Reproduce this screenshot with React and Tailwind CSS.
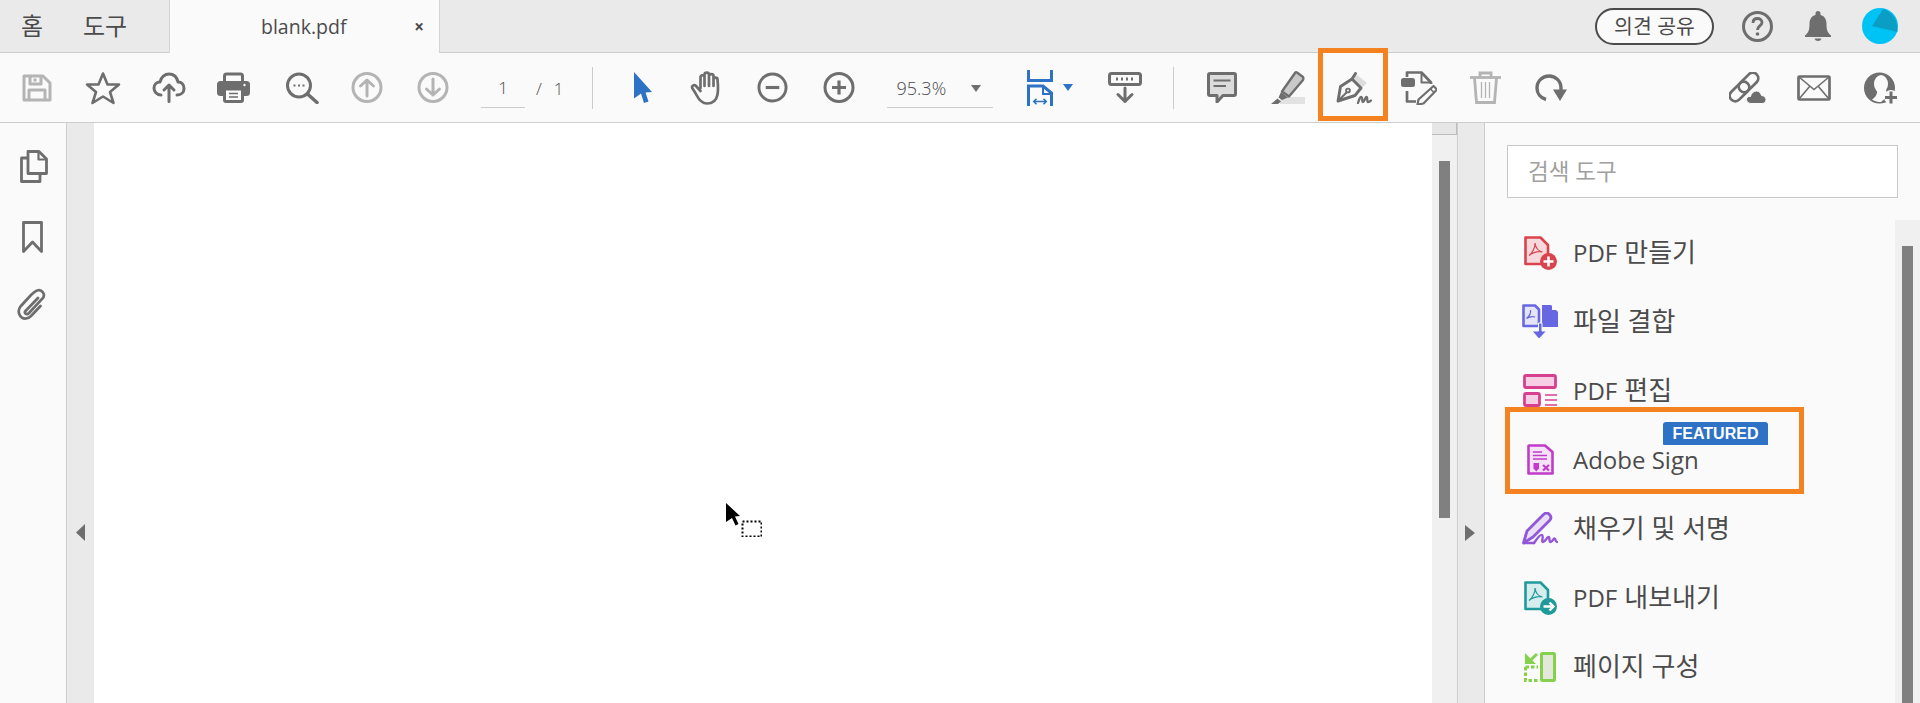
import React from "react";

const GRAY = "#6e6e6e";
const OFF = "#b4b4b4";
const BLUE = "#2d72c4";

// ---- top toolbar icons, each drawn in its own pixel box ----
const SaveIcon = () => (
  <svg viewBox="0 0 30 28" className="w-[30px] h-[28px] ml-[22px] shrink-0" fill="none" stroke={OFF} strokeWidth="3" strokeLinejoin="round">
    <path d="M2 2H21L28 9V26H2Z" />
    <path d="M8 2V10H19V2M13 4.5V7.500" />
    <path d="M7 26V16H23V26" />
  </svg>
);
const StarIcon = () => (
  <svg viewBox="0 0 36 34" className="w-[36px] h-[34px] ml-[33px] shrink-0" fill="none" stroke={GRAY} strokeWidth="2.600" strokeLinejoin="round">
    <path d="M18 2.500L22.500 13.500H34L25 21L28.500 32L18 25.500L7.500 32L11 21L2 13.500H13.500Z" />
  </svg>
);
const CloudUpIcon = () => (
  <svg viewBox="0 0 34 31" className="w-[34px] h-[31px] ml-[31px] shrink-0" fill="none" stroke={GRAY} strokeWidth="3" strokeLinecap="round" strokeLinejoin="round">
    <path d="M9 23C4.500 23 2 19.500 2 16C2 12.500 4.500 10 8 10C9 5 13 2 17 2C22 2 25 5.500 26 10C30 10 32 13 32 16.500C32 20 29.500 23 25 23" />
    <path d="M17 29.500V13M12 18L17 13L22 18" />
  </svg>
);
const PrintIcon = () => (
  <svg viewBox="0 0 33 31" className="w-[33px] h-[31px] ml-[31px] shrink-0">
    <path d="M7.500 10V4Q7.500 2 9.500 2H23.500Q25.500 2 25.500 4V10" fill="none" stroke={GRAY} strokeWidth="3" />
    <rect x="0" y="9" width="33" height="15" rx="3.500" fill={GRAY} />
    <rect x="7.500" y="17" width="18" height="12.500" rx="1.500" fill="#fafafa" stroke={GRAY} strokeWidth="3" />
    <path d="M12 21.500H21M12 25H21" stroke={GRAY} strokeWidth="1.500" />
    <circle cx="27.500" cy="13" r="1.200" fill="#fafafa" />
  </svg>
);
const SearchIcon = () => (
  <svg viewBox="0 0 34 32" className="w-[34px] h-[32px] ml-[35px] shrink-0" fill="none" stroke={GRAY} strokeWidth="3">
    <circle cx="14" cy="13.500" r="11.500" />
    <path d="M22.500 22L32 30.500" strokeWidth="3.500" strokeLinecap="round" />
    <path d="M8.500 13.500H10.500M13 13.500H15M17.500 13.500H19.500" strokeWidth="2" />
  </svg>
);
const UpIcon = () => (
  <svg viewBox="0 0 32 31" className="w-[32px] h-[31px] ml-[32px] shrink-0" fill="none" stroke={OFF} strokeWidth="3" strokeLinecap="round" strokeLinejoin="round">
    <circle cx="16" cy="15.500" r="14" />
    <path d="M16 24V8M9.500 14L16 8L22.500 14" />
  </svg>
);
const DownIcon = () => (
  <svg viewBox="0 0 32 31" className="w-[32px] h-[31px] ml-[34px] shrink-0" fill="none" stroke={OFF} strokeWidth="3" strokeLinecap="round" strokeLinejoin="round">
    <circle cx="16" cy="15.500" r="14" />
    <path d="M16 7V23M9.500 17L16 23L22.500 17" />
  </svg>
);
const ArrowIcon = () => (
  <svg viewBox="0 0 19 31" className="w-[19px] h-[31px] ml-[40px] shrink-0" fill={BLUE}>
    <path d="M1 0L19 20L12.500 20.500L15.500 29.500L11 31L8 21.500L1 26.500Z" />
  </svg>
);
const HandIcon = () => (
  <svg viewBox="0 0 34 34" className="w-[34px] h-[34px] ml-[38px] shrink-0" fill="none" stroke={GRAY} strokeWidth="2.700" strokeLinecap="round" strokeLinejoin="round">
    <path d="M10.500 17V6.500C10.500 3.500 14.500 3.500 14.500 6.500V15M14.500 15V3.800C14.500 1 19 1 19 3.800V15M19 15V5C19 2.500 23.500 2.500 23.500 5V15M23.500 15V8.500C23.500 6 27.500 6 27.500 8.500C28 14 28.500 18 27.500 23.500C26.500 29 23 32.500 17 32.500C11 32.500 8.500 28 6.500 24C5.500 22 3.500 19 2.500 17.500C1 15 4 13.200 6 15L10.500 20" />
  </svg>
);
const MinusIcon = () => (
  <svg viewBox="0 0 32 31" className="w-[31px] h-[31px] ml-[33px] shrink-0" fill="none" stroke={GRAY} strokeWidth="3">
    <circle cx="16" cy="15.500" r="14" />
    <path d="M9 15.500H23" strokeWidth="3.200" />
  </svg>
);
const PlusIcon = () => (
  <svg viewBox="0 0 32 31" className="w-[32px] h-[31px] ml-[35px] shrink-0" fill="none" stroke={GRAY} strokeWidth="3">
    <circle cx="16" cy="15.500" r="14" />
    <path d="M9 15.500H23M16 8.500V22.500" strokeWidth="3.200" />
  </svg>
);
const FitIcon = () => (
  <svg viewBox="0 0 26 36" className="w-[26px] h-[36px] ml-[34px] shrink-0" fill="none" stroke={BLUE} strokeWidth="3">
    <path d="M1.500 0V10.500H24.500V0" />
    <path d="M1.500 36V16H16L24.500 23V36" />
    <path d="M16 16V24H24.500" strokeWidth="2" />
    <path d="M7 31.500H19M9.500 28.800L6.800 31.500L9.500 34.200M16.500 28.800L19.200 31.500L16.500 34.200" strokeWidth="1.600" />
  </svg>
);
const Caret = ({ className, color }) => (
  <svg viewBox="0 0 10 7" className={className} fill={color}>
    <path d="M0 0H10L5 7Z" />
  </svg>
);
const ReadIcon = () => (
  <svg viewBox="0 0 34 31" className="w-[34px] h-[31px] ml-[35px] shrink-0">
    <rect x="1.500" y="1.500" width="31" height="11" rx="2" fill="#fafafa" stroke={GRAY} strokeWidth="3" />
    <path d="M8 7H10M13 7H15M18 7H20M23 7H25" stroke={GRAY} strokeWidth="3" />
    <path d="M17 16V29M10 22.500L17 29.500L24 22.500" fill="none" stroke={GRAY} strokeWidth="3" strokeLinecap="round" strokeLinejoin="round" />
  </svg>
);
const CommentIcon = () => (
  <svg viewBox="0 0 30 31" className="w-[30px] h-[31px] ml-[33px] shrink-0">
    <path d="M3 1.500H27Q28.500 1.500 28.500 3V22Q28.500 23.500 27 23.500H16L10 30V23.500H3Q1.500 23.500 1.500 22V3Q1.500 1.500 3 1.500Z" fill="#dcdcdc" stroke={GRAY} strokeWidth="3" strokeLinejoin="round" />
    <path d="M6.500 8.500H23.500M6.500 14H19" stroke={GRAY} strokeWidth="1.800" />
  </svg>
);
const HighlightIcon = () => (
  <svg viewBox="0 0 34 33" className="w-[34px] h-[33px] ml-[34px] shrink-0">
    <rect x="9" y="26" width="25" height="7" fill="#e2e2e2" />
    <path d="M26 1.500L32 6C32.500 7 32.500 8 32 9L18 25.500L11 20.500L24 2C24.500 1.300 25.300 1.200 26 1.500Z" fill="#c9c9c9" stroke={GRAY} strokeWidth="2.400" strokeLinejoin="round" />
    <path d="M10 21L17 26.500L11 29L7.500 26.500Z" fill={GRAY} />
    <path d="M6.500 27.500L10 30.500L7 33H0Z" fill={GRAY} />
  </svg>
);
const PenIcon = () => (
  <svg viewBox="0 0 36 32" className="w-[36px] h-[32px] ml-[31px] shrink-0" fill="none" stroke={GRAY} strokeWidth="2.900" strokeLinejoin="round" strokeLinecap="round">
    <path d="M19 1L31 11L25.500 16.500L15.500 7Z" fill="#dddddd" stroke="none" />
    <path d="M2 29L4.500 14.500L16 7L25 16L19 23.500Z" />
    <path d="M16 7L19.500 1.500" />
    <path d="M2.500 28.500L10.500 20.500" strokeWidth="2" />
    <circle cx="12" cy="18.500" r="1.900" strokeWidth="1.900" />
    <path d="M22 31C23 28 24 24.500 25.500 25C27 25.500 25.500 30 27 30C28.500 30 29 25 30.500 25C32 25 30.500 30 32 30C33 30 34 29.500 35 28.500" strokeWidth="2.300" />
  </svg>
);
const EditDocIcon = () => (
  <svg viewBox="0 0 36 34" className="w-[36px] h-[34px] ml-[29px] shrink-0" fill="none" stroke={GRAY} strokeWidth="2.700" strokeLinejoin="round">
    <path d="M6 6V1.500H20.500L30 11.500V13" />
    <path d="M20.500 2V11.500H30" strokeWidth="2" />
    <rect x="0" y="7" width="14" height="9" rx="2.500" fill={GRAY} stroke="none" />
    <path d="M6 20V30.500H15" />
    <path d="M32.500 15L36 18.500L22.500 32.500L16.500 33.500L17.500 28.500Z" fill="#fafafa" strokeWidth="2.200" />
    <path d="M29.500 18L33 21.500" strokeWidth="1.600" />
  </svg>
);
const TrashIcon = () => (
  <svg viewBox="0 0 31 33" className="w-[31px] h-[33px] ml-[33px] shrink-0" fill="none" stroke={OFF} strokeWidth="2.800">
    <path d="M0 6.500H31" />
    <path d="M10 6V2H21V6" />
    <path d="M4.500 7L6.500 31.500H24.500L26.500 7" />
    <path d="M11.500 11V27M15.500 11V27M19.500 11V27" strokeWidth="1.300" />
  </svg>
);
const RotateIcon = () => (
  <svg viewBox="0 0 32 28" className="w-[32px] h-[28px] ml-[34px] shrink-0">
    <path d="M11 25.500C5.500 24 2 19.500 2 14C2 7 7.500 2 14 2C20.500 2 26 7 26 14V18" fill="none" stroke={GRAY} strokeWidth="3.400" />
    <path d="M18 15.500H32L25 27Z" fill={GRAY} />
  </svg>
);
const LinkCloudIcon = () => (
  <svg viewBox="0 0 37 32" className="w-[37px] h-[32px] shrink-0" fill="none" stroke={GRAY} strokeWidth="2.800">
    <rect x="8" y="5" width="23" height="11" rx="5.500" transform="rotate(-45 19.500 10.500)" />
    <rect x="-1" y="14" width="23" height="11" rx="5.500" transform="rotate(-45 10.500 19.500)" />
    <path d="M22 31.500C19 31.500 17.500 29.500 17.500 27.500C17.500 25.500 19 24 21.500 24.500C22 21.500 24.500 19 27.500 19C30.500 19 32 21.500 32.500 23.500C35 23.500 37 25.500 37 27.500C37 30 35.500 31.500 33 31.500Z" fill={GRAY} stroke="#fafafa" strokeWidth="1" />
  </svg>
);
const MailIcon = () => (
  <svg viewBox="0 0 34 26" className="w-[34px] h-[26px] ml-[31px] shrink-0" fill="none" stroke={GRAY} strokeWidth="2.700">
    <rect x="1.500" y="1.500" width="31" height="23" rx="1" />
    <path d="M2 2L17 14.500L32 2M2 24L13 11M32 24L21 11" strokeWidth="1.600" />
  </svg>
);
const UserPlusIcon = () => (
  <svg viewBox="0 0 34 32" className="w-[34px] h-[32px] ml-[33px] shrink-0">
    <circle cx="15.500" cy="16" r="15.500" fill={GRAY} />
    <ellipse cx="17" cy="12" rx="7" ry="9" fill="#fafafa" />
    <path d="M13 18C13.500 22 12 25 8 27.500C11 29.500 14 30 17 30L24 24L22 18Z" fill="#fafafa" />
    <circle cx="27" cy="25" r="7" fill="#fafafa" />
    <path d="M27 19.500V31.500M21 25.500H33" stroke={GRAY} strokeWidth="3" />
  </svg>
);

// ---- side rail icons ----
const CopiesIcon = () => (
  <svg viewBox="0 0 28 33" className="w-[28px] h-[33px] ml-[20px] mt-[27px]" fill="none" stroke={GRAY} strokeWidth="2.800" strokeLinejoin="round">
    <path d="M8 1.500H19L26.500 9V23.500H8Z" />
    <path d="M18.500 2V9.500H26" strokeWidth="2.200" />
    <path d="M8 8H1.500V31.500H20V23.500" />
  </svg>
);
const BookmarkIcon = () => (
  <svg viewBox="0 0 21 32" className="w-[21px] h-[32px] ml-[22px] mt-[38px]" fill="none" stroke={GRAY} strokeWidth="2.800" strokeLinejoin="round">
    <path d="M1.500 1.500H19.500V30.500L10.500 21L1.500 30.500Z" />
  </svg>
);
const ClipIcon = () => (
  <svg viewBox="0 0 29 32" className="w-[29px] h-[32px] ml-[17px] mt-[35px]" fill="none" stroke={GRAY} strokeWidth="2.700" strokeLinecap="round">
    <path d="M21 10L8.500 23C6.500 25 9.500 27.500 12 25L26 10C28.500 6.500 25 0.500 20 2.500C18 3.200 16 5 14 7L3.500 18.500C-0.500 23.500 3 31 9 30.500C11 30.300 12.500 29.500 14 28L23.500 18" />
  </svg>
);

// ---- tool list icons ----
const AcrobatMark = () => (
  <path d="M11 7C11.500 11 8.500 17 5 19.500C9 16.500 14 15 18.500 16C14 15 11.500 11 11 7Z" fill="none" strokeWidth="1.200" />
);
const CreateIcon = () => (
  <svg viewBox="0 0 33 34" className="w-[33px] h-[34px]" fill="none" stroke="#d9434e">
    <path d="M1.500 1.500H16.500L24 9V28H1.500Z" fill="#f6d9dc" strokeWidth="2.600" strokeLinejoin="round" />
    <AcrobatMark />
    <circle cx="24.500" cy="25.500" r="8.500" fill="#d9434e" stroke="none" />
    <path d="M24.500 20.500V30.500M19.500 25.500H29.500" stroke="#fff" strokeWidth="2.600" />
  </svg>
);
const CombineIcon = () => (
  <svg viewBox="0 0 36 35" className="w-[36px] h-[35px]" stroke="#6767e4" fill="none">
    <path d="M1.500 1.500H13L17 5.500V22H1.500Z" fill="#e4e4fa" strokeWidth="2.600" strokeLinejoin="round" />
    <path d="M8.500 6C9 9 7 12.500 4.500 14.500C7 13 10 12 13 13" strokeWidth="1.200" />
    <path d="M20 1H29L36 8V23H20Z" fill="#6767e4" stroke="none" />
    <path d="M30 0L36 6H30Z" fill="#fafafa" stroke="none" />
    <path d="M16.500 19V27H10L17 35L24.500 27H20V19Z" fill="#6767e4" stroke="#fafafa" strokeWidth="1" />
  </svg>
);
const EditIcon = () => (
  <svg viewBox="0 0 34 33" className="w-[34px] h-[33px]" stroke="#d6408f" fill="#f7cfe5" strokeWidth="2.800">
    <rect x="1.500" y="1.500" width="31" height="12" rx="1.500" />
    <rect x="1.500" y="19.500" width="15" height="12" rx="1.500" />
    <path d="M22 21H34M22 26H34M22 31H34" strokeWidth="1.600" fill="none" />
  </svg>
);
const SignIcon = () => (
  <svg viewBox="0 0 27 31" className="w-[27px] h-[31px]" stroke="#c13cc9" fill="none">
    <path d="M2 1.500H18L25.500 8V29.500H1.500V2Z" fill="#f7e3f8" strokeWidth="2.600" strokeLinejoin="round" />
    <path d="M6 8H15M6 11.500H20M6 15H20" strokeWidth="1.400" />
    <path d="M6.500 19H12V24.500L9.300 27.500L6.500 24.500Z" fill="#c13cc9" stroke="none" />
    <path d="M16 21L22 26.500M22 21L16 26.500" strokeWidth="2.200" />
  </svg>
);
const FillIcon = () => (
  <svg viewBox="0 0 36 33" className="w-[36px] h-[33px]" stroke="#9256d9" fill="none" strokeLinejoin="round" strokeLinecap="round">
    <path d="M1.500 31L5 19L22 2C24 0.500 26 1 27.500 2.500C29 4 29.500 6 28 8L11 25Z" fill="#eadff8" strokeWidth="2.800" />
    <path d="M2 31H12" strokeWidth="2.600" />
    <path d="M12 31C15 27 18 22 20 23C22 24 19 30 21 30C23.500 30 24.500 25 26.500 25C28.500 25 26.500 30 28.500 30C30.500 30 31 26.500 32.500 26.500C34 26.500 33 30 35 30" strokeWidth="2.400" />
  </svg>
);
const ExportIcon = () => (
  <svg viewBox="0 0 33 34" className="w-[33px] h-[34px]" fill="none" stroke="#1f9a9a">
    <path d="M1.500 1.500H16.500L24 9V28H1.500Z" fill="#d5eded" strokeWidth="2.600" strokeLinejoin="round" />
    <AcrobatMark />
    <circle cx="24.500" cy="25.500" r="8.500" fill="#1f9a9a" stroke="none" />
    <path d="M19.500 25.500H29M25.500 21.500L29.500 25.500L25.500 29.500" stroke="#fff" strokeWidth="2.400" />
  </svg>
);
const OrganizeIcon = () => (
  <svg viewBox="0 0 32 30" className="w-[32px] h-[30px]" fill="none" stroke="#86d14b">
    <rect x="17.500" y="1.500" width="13" height="27" rx="1" fill="#e3e8db" strokeWidth="3" />
    <path d="M1.500 15V28.500H14M1.500 15H14" strokeWidth="3" strokeDasharray="3.500 2" />
    <path d="M13 2L5 9.500" strokeWidth="3" />
    <path d="M1 1V12H12Z" fill="#86d14b" stroke="none" />
  </svg>
);

const tools = [
  { prefix: "PDF", label: "만들기", Icon: CreateIcon },
  { label: "파일 결합", Icon: CombineIcon },
  { prefix: "PDF", label: "편집", Icon: EditIcon },
  { prefix: "Adobe Sign", Icon: SignIcon, featured: true },
  { label: "채우기 및 서명", Icon: FillIcon },
  { prefix: "PDF", label: "내보내기", Icon: ExportIcon },
  { label: "페이지 구성", Icon: OrganizeIcon },
];

const App = () => {
  return (
    <div className="relative h-screen w-full overflow-hidden bg-white text-[#4b4b4b] font-['Open_Sans','Noto_Sans_CJK_KR',sans-serif]">
      {/* Menu bar with tabs */}
      <div className="flex h-[53px] items-center border-b border-[#cdcdcd] bg-[#eaeaea]">
        <span className="ml-[21px] w-[62px] text-[24px]">홈</span>
        <span className="w-[86px] text-[24px]">도구</span>
        <div className="flex h-[53px] w-[271px] items-center self-start border-x border-[#d4d4d4] bg-[#fafafa]">
          <span className="ml-[91px] text-[19.500px]">blank.pdf</span>
          <span className="ml-auto mr-[15px] text-[17px] font-bold leading-none">×</span>
        </div>
        <button className="ml-auto flex h-[37px] w-[119px] items-center justify-center rounded-full border-2 border-[#4b4b4b] bg-[#fafafa] text-[20.500px]">
          의견 공유
        </button>
        <svg viewBox="0 0 31 31" className="ml-[28px] w-[31px] h-[31px]" fill="none" stroke={GRAY} strokeWidth="3">
          <circle cx="15.500" cy="15.500" r="14" />
          <path d="M11 12C11 9 13 7.500 15.500 7.500C18 7.500 20 9 20 11.500C20 14.500 15.500 15 15.500 19" strokeWidth="2.800" />
          <circle cx="15.500" cy="23" r="1.800" fill={GRAY} stroke="none" />
        </svg>
        <svg viewBox="0 0 26 30" className="ml-[32px] w-[26px] h-[30px]" fill={GRAY}>
          <path d="M13 0C14.500 0 15.500 1 15.500 2.500V4C20 5 21.500 9 21.500 13C21.500 19 22.500 21.500 26 24.500V26H0V24.500C3.500 21.500 4.500 19 4.500 13C4.500 9 6 5 10.500 4V2.500C10.500 1 11.500 0 13 0Z" />
          <path d="M9.500 27.500H16.500C16 29.200 14.500 30 13 30C11.500 30 10 29.200 9.500 27.500Z" />
        </svg>
        <svg viewBox="0 0 36 36" className="ml-[31px] mr-[22px] w-[36px] h-[36px]">
          <circle cx="18" cy="18" r="18" fill="#00c3f5" />
          <path d="M21 1C27 2.500 33 7.500 35 16L35.500 24L10 18Z" fill="#0a9ec4" />
        </svg>
      </div>

      {/* Main toolbar */}
      <div className="flex h-[70px] items-center border-b border-[#cdcdcd] bg-[#fafafa]">
        <SaveIcon />
        <StarIcon />
        <CloudUpIcon />
        <PrintIcon />
        <SearchIcon />
        <UpIcon />
        <DownIcon />
        <div className="ml-[32px] flex h-[41px] w-[44px] shrink-0 items-center justify-center border-b border-[#cdcdcd] pt-[2px] text-[17px] font-light">1</div>
        <span className="ml-[11px] pt-[2px] text-[17px] font-light">/</span>
        <span className="ml-[12px] pt-[2px] text-[17px] font-light">1</span>
        <div className="ml-[28px] h-[42px] w-px shrink-0 bg-[#cdcdcd]" />
        <ArrowIcon />
        <HandIcon />
        <MinusIcon />
        <PlusIcon />
        <div className="ml-[32px] flex h-[41px] w-[106px] shrink-0 items-center border-b border-[#cdcdcd] pt-[2px] text-[18px] font-light">
          <span className="ml-[10px]">95.3%</span>
          <Caret className="ml-auto mr-[12px] w-[10px] h-[7px]" color={GRAY} />
        </div>
        <FitIcon />
        <Caret className="ml-[10px] w-[10px] h-[7px] shrink-0" color={BLUE} />
        <ReadIcon />
        <div className="ml-[31px] h-[42px] w-px shrink-0 bg-[#cdcdcd]" />
        <CommentIcon />
        <HighlightIcon />
        <PenIcon />
        <EditDocIcon />
        <TrashIcon />
        <RotateIcon />
        <div className="ml-auto" />
        <LinkCloudIcon />
        <MailIcon />
        <UserPlusIcon />
        <div className="w-[22px] shrink-0" />
      </div>

      {/* Document area */}
      <div className="flex h-[580px]">
        <div className="flex w-[67px] shrink-0 flex-col items-start border-r border-[#cdcdcd] bg-[#fafafa]">
          <CopiesIcon />
          <BookmarkIcon />
          <ClipIcon />
        </div>
        <div className="w-[27px] shrink-0 bg-[#eaeaea] pl-[9px] pt-[401px]">
          <svg viewBox="0 0 9 17" className="w-[9px] h-[17px]" fill={GRAY}>
            <path d="M9 0V17L0 8.500Z" />
          </svg>
        </div>
        <div className="w-[1338px] shrink-0 bg-white" />
        <div className="flex w-[26px] shrink-0 flex-col border-r border-[#cdcdcd] bg-[#f0f0f0]">
          <div className="h-[12px] border-b border-r border-[#bdbdbd] bg-[#e6e6e6]" />
          <div className="ml-[7px] mt-[26px] h-[357px] w-[11px] bg-[#808080]" />
        </div>
        <div className="w-[27px] shrink-0 border-r border-[#cdcdcd] bg-[#eaeaea] pl-[7px] pt-[402px]">
          <svg viewBox="0 0 10 16" className="w-[10px] h-[16px]" fill={GRAY}>
            <path d="M0 0L10 8L0 16Z" />
          </svg>
        </div>
        <div className="flex min-w-0 flex-1 flex-col bg-[#fafafa]">
          <div className="ml-[22px] mt-[22px] flex h-[53px] w-[391px] shrink-0 items-center border border-[#c8c8c8] bg-white pl-[20px] text-[22.500px] text-[#a0a0a0]">
            검색 도구
          </div>
          <div className="mt-[22px] flex flex-1">
            <div className="-mt-[2px] flex-1">
              {tools.map(({ prefix, label, Icon, featured }) => (
                <div key={prefix + label} className="relative flex h-[69px] items-center pl-[37px]">
                  <div className="flex w-[36px] justify-center">
                    <Icon />
                  </div>
                  <div className="ml-[15px] flex items-baseline gap-[7px]">
                    {prefix && <span className="text-[24px]">{prefix}</span>}
                    {label && <span className="text-[26px]">{label}</span>}
                  </div>
                  {featured && (
                    <span className="absolute left-[178px] top-[-3px] flex h-[23px] w-[105px] items-center justify-center rounded-t-[3px] rounded-bl-[1px] bg-[#2d72c4] text-[16px] font-bold text-white font-['Liberation_Sans',sans-serif]">
                      FEATURED
                    </span>
                  )}
                </div>
              ))}
            </div>
            <div className="w-[25px] shrink-0 bg-[#f0f0f0] pl-[7px] pt-[26px]">
              <div className="h-full w-[11px] bg-[#808080]" />
            </div>
          </div>
        </div>
      </div>

      {/* Orange callouts drawn over the screenshot */}
      <div className="absolute left-[1318px] top-[48px] h-[73px] w-[70px] border-[5px] border-[#f58220]" />
      <div className="absolute left-[1505px] top-[407px] h-[87px] w-[299px] border-[5px] border-[#f58220]" />

      {/* Mouse pointer */}
      <svg viewBox="0 0 36 34" className="absolute left-[726px] top-[503px] w-[36px] h-[34px]">
        <path d="M0 0L14 13L9 13.500L12.500 21L9.500 22.500L6 15L0 19Z" fill="#000" />
        <rect x="16.500" y="18.500" width="19" height="15" fill="none" stroke="#000" strokeWidth="2" strokeDasharray="2 2" />
      </svg>
    </div>
  );
};

export default App;
